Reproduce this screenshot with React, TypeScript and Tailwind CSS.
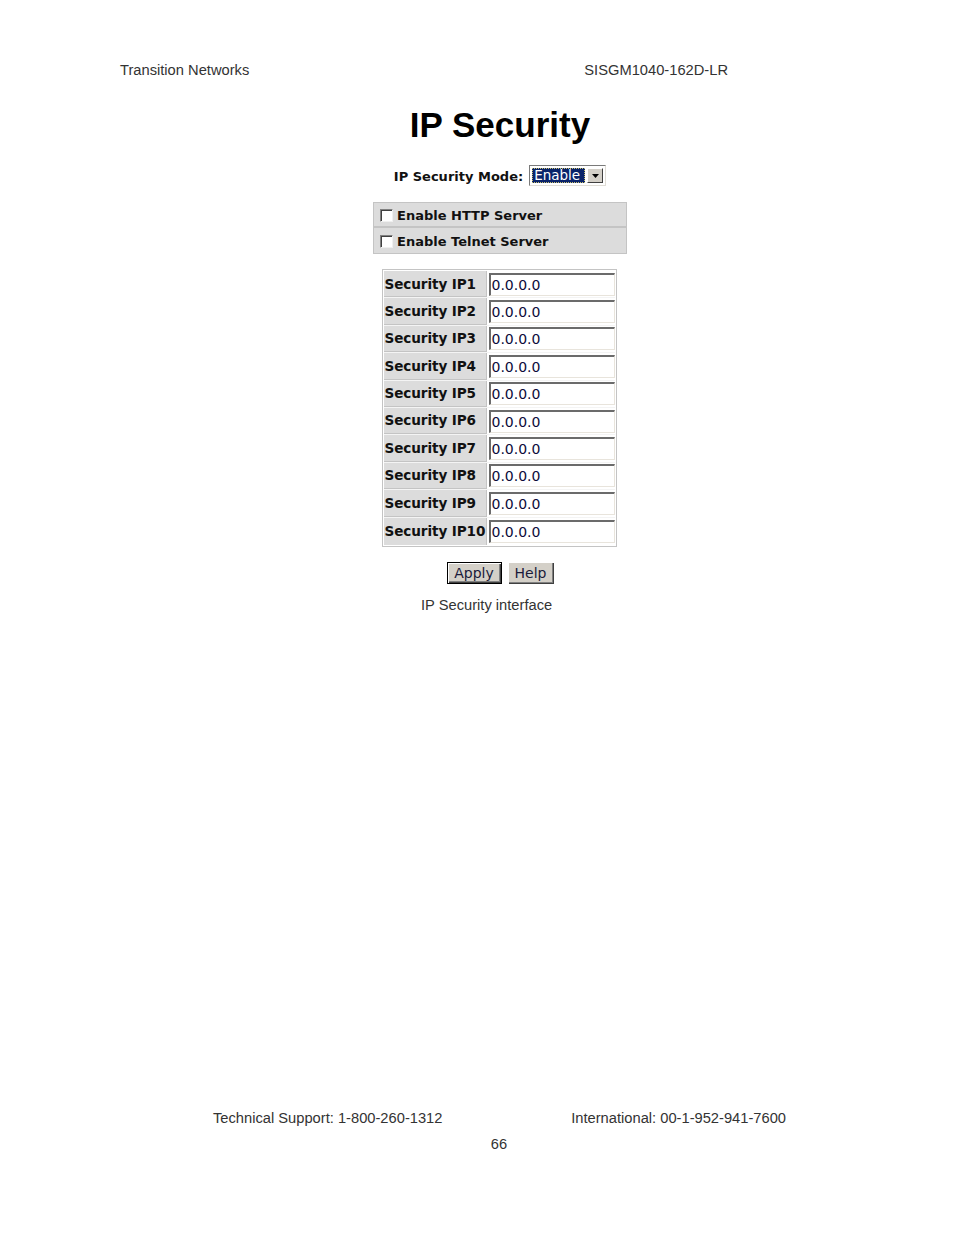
import React from 'react';

const ips = Array.from({ length: 10 }, (_, i) => `Security IP${i + 1}`);

function Checkbox() {
  return (
    <span className="inline-block w-[13px] h-[13px] bg-white border-t border-l border-t-[#808080] border-l-[#808080] border-b border-r border-b-[#f0f0f0] border-r-[#f0f0f0] shadow-[inset_1px_1px_0_#404040]" />
  );
}

function IpInput() {
  return (
    <div className="w-[126px] h-[23px] bg-white border-t-2 border-l-2 border-t-[#6b6b6b] border-l-[#6b6b6b] border-b border-r border-b-[#e8e4dc] border-r-[#e8e4dc] flex items-center pl-[1px] text-[14px] leading-none text-[#0b0b3a]">
      0.0.0.0
    </div>
  );
}

export default function App() {
  return (
    <div
      className="w-[954px] min-h-[1235px] bg-white text-black"
      style={{ fontFamily: '"DejaVu Sans", Verdana, sans-serif' }}
    >
      {/* page header */}
      <div
        className="pt-[62px] ml-[120px] w-[608px] flex justify-between text-[14.7px] leading-[16px] text-[#333]"
        style={{ fontFamily: '"Liberation Sans", Arial, sans-serif' }}
      >
        <span>Transition Networks</span>
        <span>SISGM1040-162D-LR</span>
      </div>

      <div className="pl-[46px] flex flex-col items-center">
        {/* Title */}
        <h1
          className="mt-[29px] text-[35px] leading-[36px] font-bold text-black"
          style={{ fontFamily: '"Liberation Sans", Arial, sans-serif' }}
        >
          IP Security
        </h1>

        {/* Mode */}
        <div className="mt-[22px] h-[21px] flex items-center gap-[6px]">
          <span className="text-[13px] font-bold text-[#111] pt-[2px]">IP Security Mode:</span>
          <div className="w-[77px] h-[21px] flex items-stretch border border-t-[#7a7a7a] border-l-[#7a7a7a] border-b-[#e0ddd6] border-r-[#e0ddd6] bg-white p-[2px]">
            <div className="flex-1 bg-[#0a246a] outline-1 outline-dotted outline-[#c8c070] -outline-offset-1 text-white text-[13.5px] leading-[15px] pl-[2px]">
              Enable
            </div>
            <div className="w-[16px] ml-[2px] bg-[#d4d0c8] border border-t-white border-l-white border-b-[#404040] border-r-[#404040] flex items-center justify-center">
              <svg width="7" height="4" viewBox="0 0 7 4">
                <path d="M0 0h7L3.5 4z" fill="#000" />
              </svg>
            </div>
          </div>
        </div>

        {/* Checkbox panel */}
        <div className="mt-[16px] w-[254px] border border-[#c4c4c4] bg-[#dcdcdc]">
          {['Enable HTTP Server', 'Enable Telnet Server'].map((t, i) => (
            <div
              key={t}
              className={`h-[25px] flex items-center gap-[4px] pl-[6px] pt-[2px] ${i === 0 ? 'border-b-2 border-[#c4c4c4]' : ''}`}
            >
              <Checkbox />
              <span className="text-[13px] font-bold text-[#111]">{t}</span>
            </div>
          ))}
        </div>

        {/* IP table */}
        <div className="mt-[15px] mr-[2px] w-[235px] border border-[#c4c4c4] p-[1px] bg-white">
          {ips.map((label, i) => (
            <div key={label} className={`flex h-[27.4px] ${i < 9 ? 'border-b border-[#f4f4f4]' : ''}`}>
              <div className={`w-[104px] bg-[#dcdcdc] flex items-center pl-[1px] text-[13.6px] font-bold text-[#111] whitespace-nowrap tracking-[-0.1px] ${i < 9 ? 'border-b border-[#c4c4c4]' : ''}`}>
                {label}
              </div>
              <div className="flex-1 flex items-center pl-[2px] border-l border-[#c4c4c4]">
                <IpInput />
              </div>
            </div>
          ))}
        </div>

        {/* Buttons */}
        <div className="mt-[15px] flex gap-[6px]">
          <button className="w-[55px] h-[22px] border border-black bg-[#d4d0c8] text-[14px] leading-none text-[#1a1a3a] shadow-[inset_1px_1px_0_#fff,inset_-1px_-1px_0_#404040,inset_-2px_-2px_0_#808080]">
            Apply
          </button>
          <button className="w-[46px] h-[22px] bg-[#d4d0c8] text-[14px] leading-none text-[#1a1a3a] shadow-[inset_1px_1px_0_#fff,inset_-1px_-1px_0_#404040,inset_-2px_-2px_0_#808080]">
            Help
          </button>
        </div>
      </div>

      {/* Caption */}
      <p
        className="mt-[13px] ml-[421px] text-[14.7px] leading-[16px] text-[#333]"
        style={{ fontFamily: '"Liberation Sans", Arial, sans-serif' }}
      >
        IP Security interface
      </p>

      {/* page footer */}
      <div style={{ fontFamily: '"Liberation Sans", Arial, sans-serif' }} className="text-[14.7px] leading-[16px] text-[#333]">
        <div className="mt-[497px] ml-[213px] w-[573px] flex justify-between">
          <span>Technical Support: 1-800-260-1312</span>
          <span>International: 00-1-952-941-7600</span>
        </div>
        <div className="mt-[10px] pl-[44px] text-center">66</div>
      </div>
    </div>
  );
}
